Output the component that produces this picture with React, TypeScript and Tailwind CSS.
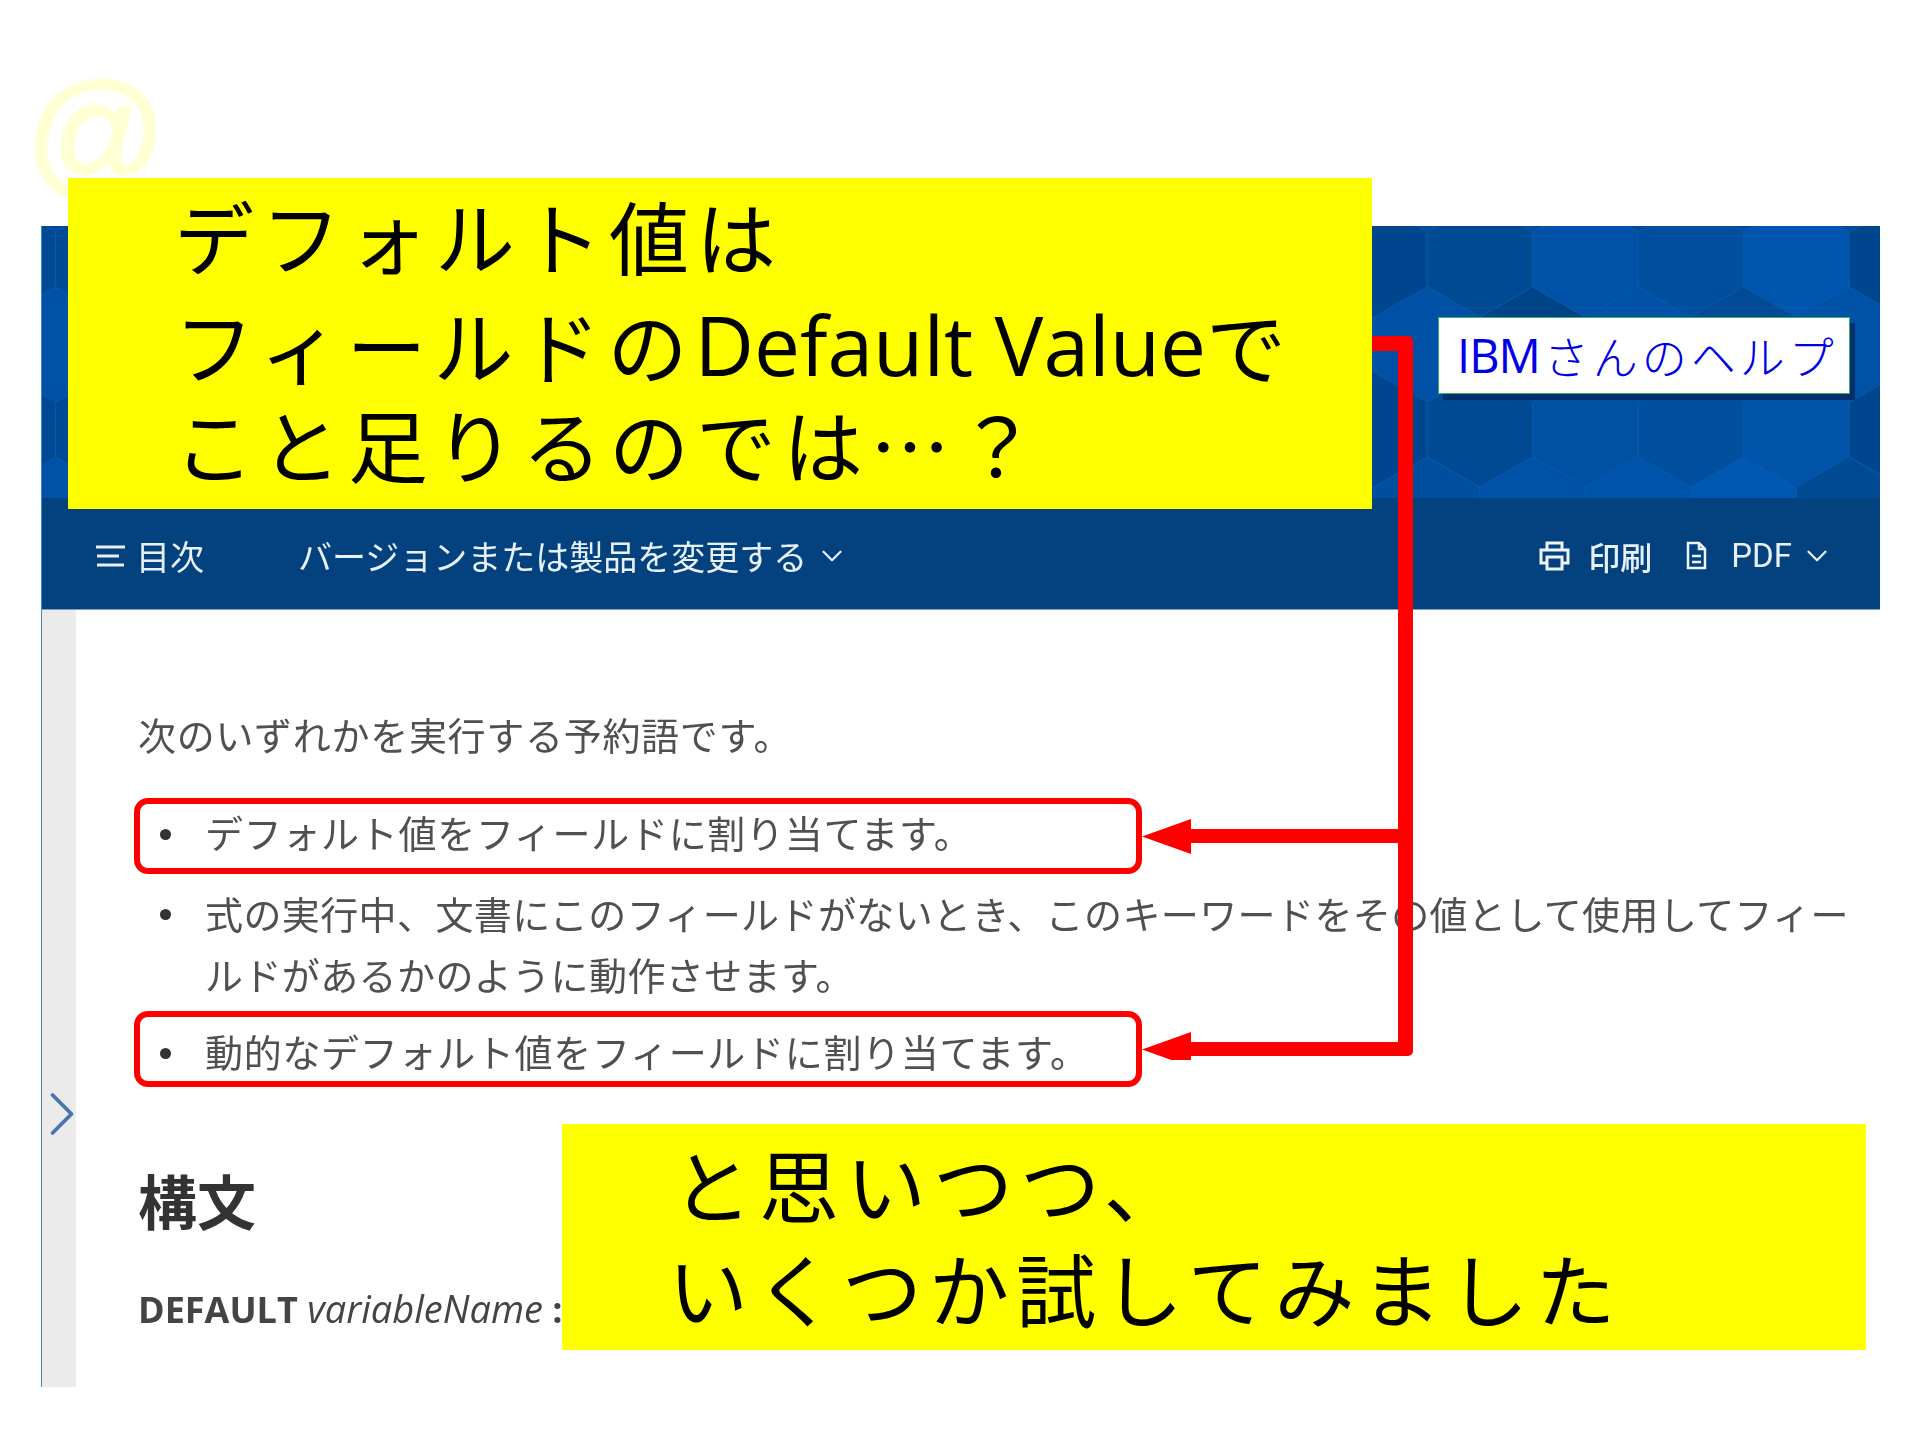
import { ChevronDown, ChevronRight } from "lucide-react";

const HEX_W = 105.5;
// fill shades per row of the header's honeycomb, first entry sits at firstCx
const ROWS = [
  { apex: -24, firstCx: 1479, fills: ["#004a94", "#0052a8", "#004f9f", "#0056ae", "#00468e"] },
  { apex: 61, firstCx: 1426, fills: ["#0050a5", "#004488", "#0052a8", "#004a96", "#0052a6"] },
  { apex: 146, firstCx: 1479, fills: ["#004a94", "#0050a4", "#004f9f", "#0053a9", "#00468e"] },
  { apex: 231, firstCx: 1426, fills: ["#004f9f", "#0052a8", "#0053aa", "#0058b3", "#004a94"] },
];

function Honeycomb() {
  const hexes = ROWS.flatMap((row, rowIndex) =>
    Array.from({ length: 20 }, (_, i) => {
      const k = i - 14;
      const cx = row.firstCx + k * HEX_W - 41;
      const r = HEX_W / 2;
      const a = row.apex;
      const pts = `${cx},${a} ${cx + r},${a + 30} ${cx + r},${a + 85} ${cx},${a + 115} ${cx - r},${a + 85} ${cx - r},${a + 30}`;
      let fill = row.fills[((k % 5) + 5) % 5];
      // left sliver beside the yellow note
      if (cx < 100) fill = rowIndex % 2 === 0 ? "#004a94" : "#0052a8";
      return <polygon key={`${rowIndex}-${i}`} points={pts} fill={fill} stroke="#0a58ab" strokeWidth="1" />;
    })
  );
  return (
    <svg className="absolute inset-0" width="1839" height="272" viewBox="0 0 1839 272">
      <rect width="1839" height="272" fill="#004c9b" />
      {hexes}
    </svg>
  );
}

function MenuIcon() {
  return (
    <svg width="30" height="24" viewBox="0 0 30 24" stroke="#e8f0f8" strokeWidth="3" fill="none">
      <path d="M0 3h29M1 12h22M1 21h27" />
    </svg>
  );
}

function PrinterIcon() {
  return (
    <svg width="31" height="31" viewBox="0 0 31 31" stroke="#eef4fa" strokeWidth="3" fill="none">
      <path d="M8 9V3h15v6" />
      <path d="M8 23H2V10h27v13h-6" />
      <path d="M8 17h15v12H8z" />
    </svg>
  );
}

function FileIcon() {
  return (
    <svg width="21" height="29" viewBox="0 0 21 29" stroke="#eef4fa" strokeWidth="2.5" fill="none">
      <path d="M2 2h11l6 6v19H2z" />
      <path d="M13 2v6h6M6 15h9M6 21h9" />
    </svg>
  );
}

function Arrows() {
  return (
    <svg className="absolute left-[1140px] top-[335px]" width="275" height="725" viewBox="1140 335 275 725">
      <path
        d="M1372 336h36a5 5 0 0 1 5 5v710a5 5 0 0 1-5 5h-217v11l-49-17.500 49-17.500v10h207v-199h-207v11l-49-17.500 49-17.500v10h207v-478h-26z"
        fill="#ff0000"
      />
    </svg>
  );
}

function Bullet() {
  return <span className="mr-[34px] mt-[27px] h-[11px] w-[11px] shrink-0 rounded-full bg-[#333333]" />;
}

const jp = "font-['Noto_Sans_CJK_JP',sans-serif]";

export default function App() {
  return (
    <div className={`relative h-[1440px] w-[1920px] overflow-hidden bg-white ${jp}`}>
      <div className="absolute left-[23px] top-[53px] font-['Liberation_Sans',sans-serif] text-[139px] leading-[160px] italic text-[#ffffd4] [-webkit-text-stroke:3px_#ffffd4]">
        @
      </div>

      {/* captured help page */}
      <div className="ml-[41px] pt-[226px] w-[1839px]">
        <div className="relative h-[272px] overflow-hidden border-l border-[#3f86c4]">
          <Honeycomb />
        </div>
        <div className="flex h-[112px] items-center bg-[#03417f] pl-[54px] pr-[46px] pt-[4px] text-[34px] leading-none text-[#e8f0f8] border-l border-[#3f86c4] border-b border-b-[#7f9fbf]">
          <MenuIcon />
          <span className="ml-[10px] blur-[0.4px]">目次</span>
          <span className="ml-[94px] blur-[0.4px]">バージョンまたは製品を変更する</span>
          <ChevronDown className="ml-[8px] h-[34px] w-[34px]" strokeWidth={1.6} />
          <div className="ml-auto flex items-center">
            <PrinterIcon />
            <span className="ml-[18px] text-[32px] font-medium blur-[0.4px]">印刷</span>
            <span className="ml-[34px] flex">
              <FileIcon />
            </span>
            <span className="ml-[24px] font-['Roboto',sans-serif] text-[33px] blur-[0.4px]">PDF</span>
            <ChevronDown className="ml-[8px] h-[34px] w-[34px]" strokeWidth={1.6} />
          </div>
        </div>
        <div className="flex h-[777px]">
          <div className="flex w-[35px] flex-col items-center border-l border-[#3f86c4] bg-[#ebebeb] pt-[466px]">
            <ChevronRight className="ml-[6px] h-[76px] w-[76px] shrink-0 text-[#4a74b0]" strokeWidth={1.2} />
          </div>
          <div className="flex-1 pl-[62px] pt-[94px] text-[38px] leading-[60px] tracking-[0.7px] text-[#505050] blur-[0.4px]">
            <p className="h-[60px]">次のいずれかを実行する予約語です。</p>
            <ul className="ml-[22px] mt-[38px] w-[1725px]">
              <li className="flex h-[80px]">
                <Bullet />
                <span>デフォルト値をフィールドに割り当てます。</span>
              </li>
              <li className="flex h-[139px] leading-[61px] tracking-[0.4px]">
                <Bullet />
                <span className="w-[1670px]">
                  式の実行中、文書にこのフィールドがないとき、このキーワードをその値として使用してフィールドがあるかのように動作させます。
                </span>
              </li>
              <li className="flex h-[60px]">
                <Bullet />
                <span>動的なデフォルト値をフィールドに割り当てます。</span>
              </li>
            </ul>
            <h2 className="mt-[84px] text-[59px] font-bold leading-[70px] tracking-normal text-[#333333]">構文</h2>
            <p className="mt-[48px] whitespace-nowrap font-['Open_Sans',sans-serif] text-[36px] leading-[50px] tracking-normal text-[#444444]">
              <b>DEFAULT</b> <i className="text-[38px]">variableName</i> <b>:</b>
            </p>
          </div>
        </div>
      </div>

      {/* slide annotations */}
      <div className="absolute left-[134px] top-[798px] h-[76px] w-[1008px] rounded-[14px] border-[6px] border-[#ff0000]" />
      <div className="absolute left-[134px] top-[1011px] h-[76px] w-[1008px] rounded-[14px] border-[6px] border-[#ff0000]" />
      <Arrows />

      <div className="absolute left-[68px] top-[178px] h-[331px] w-[1304px] bg-[#ffff00] pl-[106px] pt-[4px] text-[80px] leading-[105px] tracking-[7px] text-black">
        <div>デフォルト値は</div>
        <div className="mt-[4px] flex h-[105px] items-center whitespace-nowrap">
          フィールドの<span className="font-['Open_Sans',sans-serif] text-[82px] leading-none tracking-normal">Default Value</span>で
        </div>
        <div className="-mt-[6px]">こと足りるのでは…？</div>
      </div>

      <div className="absolute left-[562px] top-[1124px] h-[226px] w-[1304px] bg-[#ffff00] pl-[110px] pt-[6px] text-[80px] leading-[104px] tracking-[7px] text-black">
        <div>と思いつつ、</div>
        <div className="-ml-[4px]">いくつか試してみました</div>
      </div>

      <div className="absolute left-[1438px] top-[317px] flex h-[77px] w-[412px] items-center whitespace-nowrap border border-[#3fae6a] bg-white pl-[18px] text-[45px] font-light leading-none text-[#0000e6] shadow-[5px_6px_0_#03306b]">
        <span className="font-['Open_Sans',sans-serif] text-[47px] font-normal tracking-[-1px]">IBM</span>
        <span className="ml-[4px] tracking-[4px]">さんのヘルプ</span>
      </div>
    </div>
  );
}
